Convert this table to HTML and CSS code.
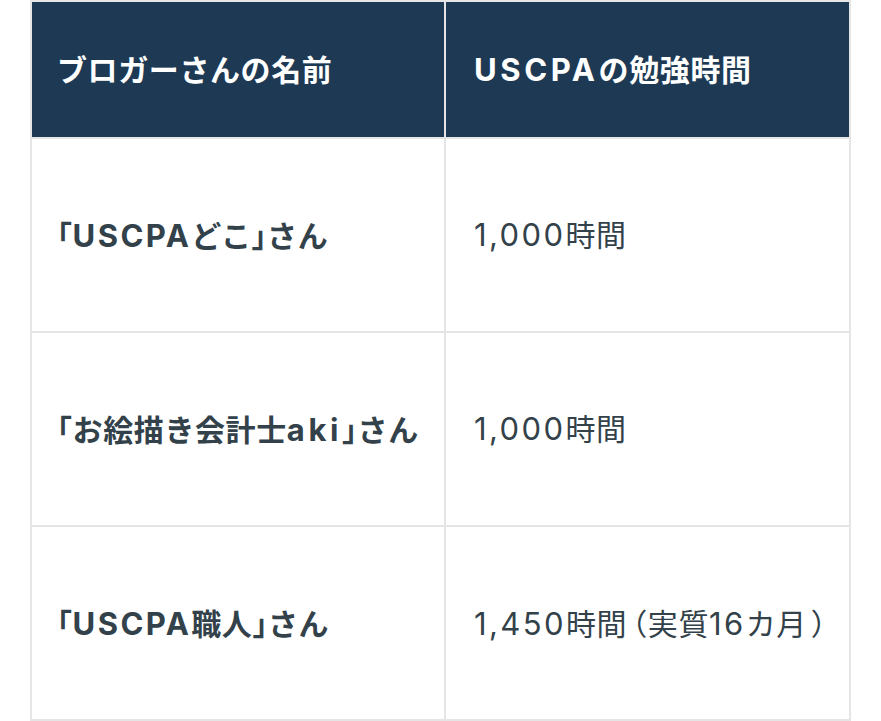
FILE: index.html
```html
<!DOCTYPE html>
<html lang="ja">
<head>
<meta charset="utf-8">
<link rel="stylesheet" href="styles.css">
</head>
<body>
<div class="wrap">
<table class="tbl">
  <thead>
    <tr>
      <th class="c1">ブロガーさんの名前</th>
      <th class="c2"><span class="lat hd">USCPA</span>の勉強時間</th>
    </tr>
  </thead>
  <tbody>
    <tr>
      <td class="c1 name"><span class="br">「</span><span class="lat">USCPA</span>どこ<span class="br">」</span>さん</td>
      <td class="c2"><span class="lat">1,000</span>時間</td>
    </tr>
    <tr>
      <td class="c1 name"><span class="br">「</span>お絵描き会計士<span class="lat ak">aki</span><span class="br">」</span>さん</td>
      <td class="c2"><span class="lat">1,000</span>時間</td>
    </tr>
    <tr>
      <td class="c1 name"><span class="br">「</span><span class="lat">USCPA</span>職人<span class="br">」</span>さん</td>
      <td class="c2"><span class="lat">1,450</span>時間<span class="br pl">（</span>実質<span class="lat">16</span>カ月<span class="br pr">）</span></td>
    </tr>
  </tbody>
</table>
</div>
</body>
</html>
```
FILE: styles.css
```css
html, body {
  margin: 0;
  padding: 0;
  background: #ffffff;
}
.wrap {
  padding: 0 30px;
}
.tbl {
  width: 821px;
  table-layout: fixed;
  border-collapse: separate;
  border-spacing: 2px;
  background: #e5e5e5;
  font-family: Inter, "Noto Sans CJK JP", sans-serif;
  font-size: 30px;
  letter-spacing: 0.6px;
  color: #33424a;
}
.tbl th, .tbl td {
  padding: 0 0 0 25px;
  text-align: left;
  vertical-align: middle;
  white-space: nowrap;
  background: #ffffff;
}
.tbl th {
  height: 135px;
  background: #1d3954;
  color: #ffffff;
  font-weight: 700;
  line-height: 1.2;
}
.tbl td {
  height: 192px;
  font-weight: 400;
  line-height: 1.2;
}
.tbl td.name {
  font-weight: 700;
  padding-left: 25px;
}
.c1 {
  width: 412px;
  box-sizing: border-box;
}
.c2 {
  padding-left: 28px !important;
}
.br {
  font-family: "Noto Sans CJK JP", sans-serif;
  font-feature-settings: "halt";
}
.br.pl {
  padding-left: 5px;
}
.br.pr {
  padding-left: 4px;
}
.lat {
  font-size: 31px;
  letter-spacing: 2.4px;
}
.lat.hd {
  letter-spacing: 3.6px;
}
.lat.ak {
  letter-spacing: 3.6px;
}
```
